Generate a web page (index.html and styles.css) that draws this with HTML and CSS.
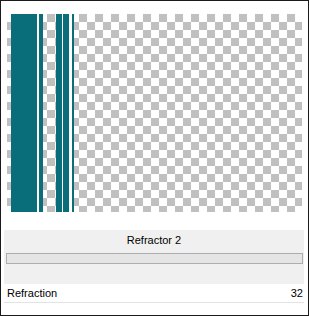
FILE: index.html
```html
<!DOCTYPE html>
<html>
    <head>
        <meta charset="UTF-8">
        <link rel="stylesheet" href="styles.css">
    </head>
    <body>
        <div class="frame">
            <!-- preview -->
            <div class="preview">
                <svg width="295" height="198" class="stripes">
                    <rect x="30" y="0" width="2" height="198" fill="#ffffff"></rect>
                    <rect x="55" y="0" width="1" height="198" fill="#ffffff"></rect>
                    <rect x="62" y="0" width="3" height="198" fill="#ffffff"></rect>
                    <rect x="4" y="0" width="26" height="198" fill="#0a6d7a"></rect>
                    <rect x="32" y="0" width="4" height="198" fill="#0a6d7a"></rect>
                    <rect x="49" y="0" width="6" height="198" fill="#0a6d7a"></rect>
                    <rect x="56" y="0" width="6" height="198" fill="#0a6d7a"></rect>
                    <rect x="65" y="0" width="2" height="198" fill="#0a6d7a"></rect>
                </svg>
            </div>
            <!-- settings -->
            <div class="panel">
                <div class="panel_title">Refractor 2</div>
                <div class="track"></div>
            </div>
            <div class="value_row">
                <span>Refraction</span>
                <span>32</span>
            </div>
        </div>
    </body>
</html>
```

FILE: styles.css
```css
body{
    margin: 0;
    background-color: #ffffff;
    font-family: "Liberation Sans", Arial, sans-serif;
}

.frame{
    box-sizing: border-box;
    width: 309px;
    height: 316px;
    border: 1px solid #1a1a1a;
    background: #ffffff;
    display: flex;
    flex-direction: column;
}

.preview{
    width: 295px;
    height: 198px;
    margin: 13px 0 0 6px;
    background: conic-gradient(#c0c0c0 25%, #ffffff 0 50%, #c0c0c0 0 75%, #ffffff 0) 0 0 / 16px 16px;
}

.stripes{
    display: block;
}

/* panel */
.panel{
    width: 300px;
    height: 54px;
    margin: 18px 0 0 3px;
    background: #f0f0f0;
}

.panel_title{
    height: 20px;
    line-height: 21px;
    text-align: center;
    font-size: 11px;
    color: #000000;
}

.track{
    box-sizing: border-box;
    height: 11px;
    margin: 3px 1px 0 2px;
    background: #e5e5e5;
    border: 1px solid #adadad;
}

.value_row{
    box-sizing: border-box;
    width: 300px;
    height: 19px;
    margin-left: 3px;
    padding: 0 1px 0 3px;
    display: flex;
    justify-content: space-between;
    align-items: center;
    font-size: 11px;
    color: #000000;
    border-bottom: 1px solid #e3e3e3;
}
```
